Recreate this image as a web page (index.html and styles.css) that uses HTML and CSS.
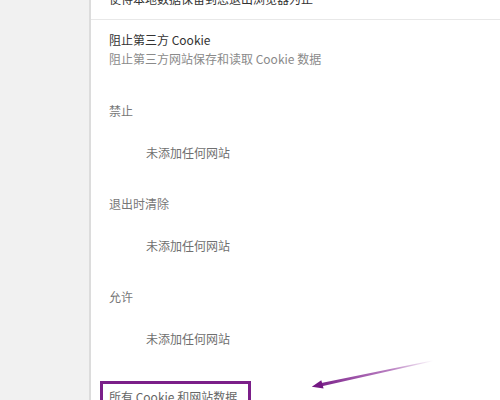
FILE: index.html
```html
<!DOCTYPE html>
<html lang="zh-CN">
<head>
<meta charset="utf-8">
<title>Cookie 设置</title>
<link rel="stylesheet" href="styles.css">
</head>
<body>
<div class="page">
  <aside class="sidebar"></aside>
  <main class="content">
    <div class="row top">使得本地数据保留到您退出浏览器为止</div>
    <div class="row setting">
      <div class="title">阻止第三方 Cookie</div>
      <div class="sub">阻止第三方网站保存和读取 Cookie 数据</div>
    </div>
    <section class="row group">
      <div class="label">禁止</div>
      <div class="empty">未添加任何网站</div>
    </section>
    <section class="row group">
      <div class="label">退出时清除</div>
      <div class="empty">未添加任何网站</div>
    </section>
    <section class="row group">
      <div class="label">允许</div>
      <div class="empty">未添加任何网站</div>
    </section>
    <div class="all">
      <span class="highlight">所有 Cookie 和网站数据</span>
    </div>
  </main>
  <svg class="arrow" width="500" height="400" viewBox="0 0 500 400">
    <defs>
      <linearGradient id="shaft" x1="433" y1="360" x2="312" y2="387" gradientUnits="userSpaceOnUse">
        <stop offset="0" stop-color="#8a2a98" stop-opacity="0"/>
        <stop offset="0.35" stop-color="#8a2a98" stop-opacity="0.6"/>
        <stop offset="1" stop-color="#741883"/>
      </linearGradient>
    </defs>
    <path d="M433.1 360.3 L432.9 361.2 L321.9 386.3 L321.3 382.9 Z" fill="url(#shaft)"/>
    <polygon points="311.8,386.8 321.3,380.2 323.6,388.6" fill="#741883"/>
  </svg>
</div>
</body>
</html>
```

FILE: styles.css
```css
html, body {
  margin: 0;
  padding: 0;
  background: #ffffff;
}

body {
  font-family: "Noto Sans CJK SC", "Noto Sans", sans-serif;
  font-size: 12px;
  line-height: 19px;
}

.page {
  position: relative;
  display: flex;
  width: 500px;
  height: 400px;
  overflow: hidden;
}

.sidebar {
  flex: 0 0 89px;
  background: #f1f1f1;
  border-right: 2px solid #dcdcdc;
}

.content {
  flex: 1;
  display: flex;
  flex-direction: column;
  background: #ffffff;
}

.row {
  padding: 0 18px;
}

.top {
  margin-top: -11px;
  padding-bottom: 11px;
  border-bottom: 1px solid #e8e8e8;
  color: #333333;
}

.setting {
  padding-top: 10px;
}

.title {
  color: #333333;
}

.sub {
  color: #8a8a8a;
}

.group {
  display: flex;
  flex-direction: column;
}

.label {
  margin-top: 32.5px;
  color: #777777;
}

.group:first-of-type .label {
  margin-top: 33px;
}

.empty {
  margin-top: 22.5px;
  padding-left: 37px;
  color: #6f6f6f;
}

.all {
  margin-top: 33.5px;
  padding-left: 9px;
}

.highlight {
  display: inline-block;
  box-sizing: border-box;
  width: 151px;
  padding: 2.5px 6px 10px;
  border: 3px solid #7b1f89;
  color: #666666;
}

.arrow {
  position: absolute;
  left: 0;
  top: 0;
  pointer-events: none;
}
```
